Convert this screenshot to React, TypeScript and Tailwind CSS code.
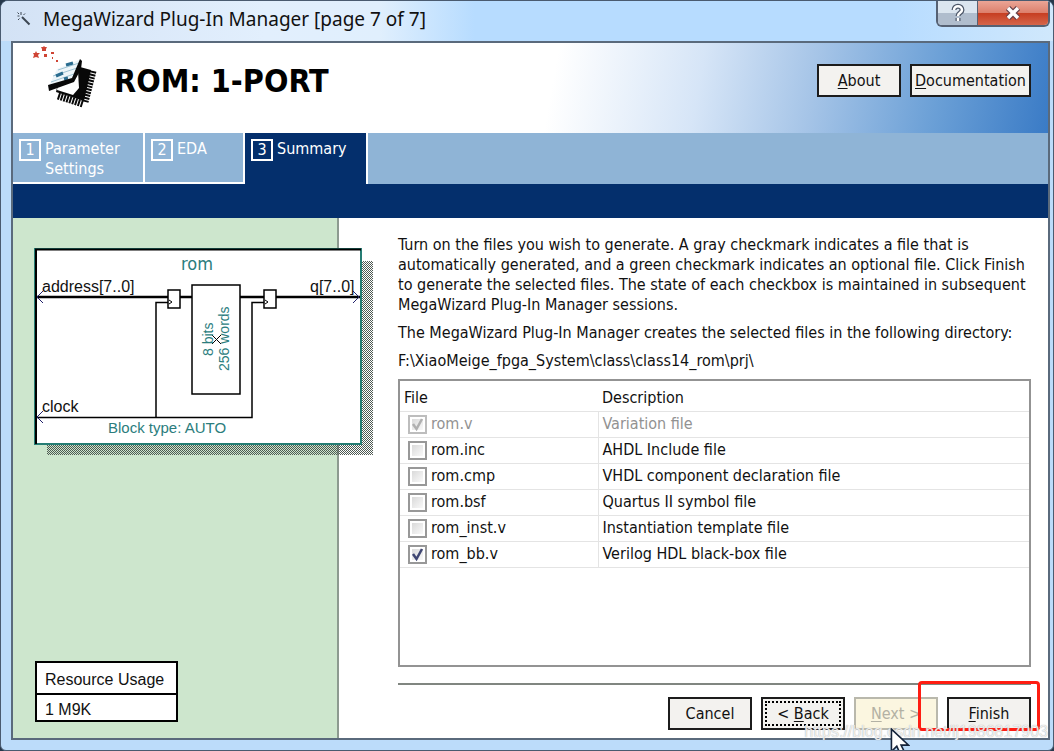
import { useState } from "react"
import type { ReactNode } from "react"
import clsx from "clsx"

const files = [
  { name: "rom.v", description: "Variation file", checked: true, disabled: true },
  { name: "rom.inc", description: "AHDL Include file", checked: false },
  { name: "rom.cmp", description: "VHDL component declaration file", checked: false },
  { name: "rom.bsf", description: "Quartus II symbol file", checked: false },
  { name: "rom_inst.v", description: "Instantiation template file", checked: false },
  { name: "rom_bb.v", description: "Verilog HDL black-box file", checked: true },
]

const tabs = [
  { step: 1, label: "Parameter Settings", width: "w-[132px]" },
  { step: 2, label: "EDA", width: "w-[100px]" },
  { step: 3, label: "Summary", width: "w-[123px]", active: true },
]

function Button({ children, className, disabled }: { children: ReactNode; className?: string; disabled?: boolean }) {
  return (
    <button
      type="button"
      disabled={disabled}
      className={clsx(
        "relative h-[33px] border-2 whitespace-nowrap",
        disabled ? "border-[#b9b8ac] bg-[#fbf6e0] text-[#b3b1a4]" : "border-[#1c1c1c] bg-[#f3f2ef] text-[#111]",
        className
      )}
    >
      {children}
    </button>
  )
}

function WandIcon() {
  return (
    <svg className="h-4 w-4" viewBox="0 0 16 16" fill="none" stroke="#3c4652">
      <path d="M6 6l7.500 7.500" strokeWidth="2" />
      <path d="M5 1v3M1.500 5h2M9 2.500L7.500 4M2 9l1.500-1.500M1.500 1.500l1.500 1.500" strokeWidth="1" />
    </svg>
  )
}

function ChipLogo() {
  return (
    <svg className="h-16 w-16 overflow-visible" viewBox="0 0 64 64">
      <g fill="#cf4434">
        <path d="M-1 6h2l1-2 1 2h3l-2 2 1 3-3-1-3 1 1-3z" />
        <path d="M7 0h2l1-1 1 1h2l-1 2v2H8V2z" />
        <path d="M10 7h3v3h-3zM17 5h3v2h-3zM18 10h1v2h-1zM22 13h2v2h-2z" />
      </g>
      {/* package body and its pins */}
      <path d="M46 20l11 3-7 31-28-9 2-9z" fill="#080808" />
      <path d="M24 49l25 8" stroke="#080808" strokeWidth="7" strokeDasharray="2 1" />
      <path d="M59 24l-8 31" stroke="#080808" strokeWidth="7" strokeDasharray="2 1" />
      <path d="M24 38l20-14 1 17-6 7-16-5z" fill="#fff" />
      {/* lifted cover */}
      <path d="M23 22l24-10-8 20-25 9z" fill="#edf5f9" />
      <path d="M19 29l24-8M17 35l23-8M24 23l21-7" stroke="#9fc3d3" strokeWidth="1" />
      <path d="M22 29l7-3M32 18l7-2M30 32l4-1" stroke="#2a6c8f" strokeWidth="3" />
      <path d="M14 38l24-7 8-19 2 2-1 8-7 13-25 9z" fill="#080808" />
    </svg>
  )
}

function SymbolDiagram() {
  return (
    <svg className="relative z-10 block h-[208px] w-[340px] shrink-0" viewBox="0 0 340 208" fontFamily="Liberation Sans, Arial, sans-serif">
      <defs>
        <pattern id="dither" width="2" height="2" patternUnits="userSpaceOnUse">
          <path d="M0 0h1v1H0zM1 1h1v1H1z" fill="#4f5a53" />
        </pattern>
      </defs>
      <path d="M13 13h326v194H13z" fill="url(#dither)" />
      <path d="M1 1h326v195H1z" fill="#fff" stroke="#267d74" strokeWidth="2" />
      <path d="M2 196V1.500H327" fill="none" stroke="#000" strokeWidth="2" />
      <g fill="none" stroke="#000">
        <path d="M3 49h131M146 49h12M206 49h24M242 49h84" strokeWidth="2.500" />
        <path d="M3 169.500h215V54.500h12M122 169.500V54.500h12" strokeWidth="1.500" />
        <path d="M134 42h12v18h-12zM230 42h12v18h-12zM158 37h48v109h-48z" strokeWidth="1.500" fill="#fff" />
        <path d="M135 52l3 2-3 2M231 52l3 2-3 2M178 87l9 9M187 87l-9 9" />
      </g>
      <path d="M9 43l-6 6 6 6M9 163l-6 6 6 6M319 43l6 6-6 6" fill="none" stroke="#23236b" />
      <g fill="#111" fontSize="16">
        <text x="8" y="44">address[7..0]</text>
        <text x="276" y="44">q[7..0]</text>
        <text x="8" y="164">clock</text>
      </g>
      <g fill="#2b7d7d">
        <text x="163" y="22" fontSize="18" textAnchor="middle" fontFamily="DejaVu Sans Condensed, Noto Sans, sans-serif">rom</text>
        <text x="74" y="185" fontSize="15">Block type: AUTO</text>
        <text transform="translate(179 108) rotate(-90)" fontSize="14">8 bits</text>
        <text transform="translate(195 123) rotate(-90)" fontSize="14">256 words</text>
      </g>
    </svg>
  )
}

function Cursor() {
  return (
    <svg className="absolute right-[138px] -bottom-5 z-20 h-[30px] w-[20px]" viewBox="0 0 18 28">
      <path d="M1 1v21l5-5 4 9 4-2-4-8h7z" fill="#fff" stroke="#14233a" strokeWidth="1.500" />
    </svg>
  )
}

function FileTable() {
  const [checked, setChecked] = useState(files.map((file) => file.checked))

  return (
    <div className="mt-2 min-h-[288px] flex-1 border-2 border-[#939393] bg-white">
      <table className="w-full table-fixed border-collapse text-left">
        <thead>
          <tr className="h-[30px] border-b border-[#e4e4e4]">
            <th className="w-[198px] pt-1 pl-1 font-normal">File</th>
            <th className="pt-1 pl-1 font-normal">Description</th>
          </tr>
        </thead>
        <tbody>
          {files.map((file, index) => (
            <tr key={file.name} className={clsx("h-[26px] border-b border-[#e4e4e4]", file.disabled && "text-[#929292]")}>
              <td className="border-r border-[#e4e4e4] p-0 pl-2">
                <label className="flex items-center gap-1">
                  <span className="relative h-[19px] w-[19px]">
                    <input
                      type="checkbox"
                      checked={checked[index]}
                      disabled={file.disabled}
                      onChange={() => setChecked(checked.map((value, i) => (i === index ? !value : value)))}
                      className={clsx(
                        "block h-[19px] w-[19px] appearance-none border-2 bg-[linear-gradient(135deg,#d4d4d4,#ffffff)] bg-clip-content p-[2px]",
                        file.disabled ? "border-[#bdbdbd]" : "border-[#989898]"
                      )}
                    />
                    {checked[index] && (
                      <svg className="pointer-events-none absolute inset-0" viewBox="0 0 19 19" fill="none">
                        <path d="M5 9l3.500 5L14 4" stroke={file.disabled ? "#b0b0b0" : "#3f4672"} strokeWidth="2.500" />
                      </svg>
                    )}
                  </span>
                  {file.name}
                </label>
              </td>
              <td className="p-0 pl-1">{file.description}</td>
            </tr>
          ))}
        </tbody>
      </table>
    </div>
  )
}

export default function App() {
  return (
    <div className="flex min-h-screen flex-col overflow-hidden bg-[#26384b] font-['DejaVu_Sans_Condensed','Noto_Sans',sans-serif] text-[16px] leading-5 text-[#111]">
      <div className="relative flex flex-1 flex-col overflow-hidden rounded-t-lg rounded-b-md border border-[#4a5b70] bg-[#bcdcfa] pr-[3px] pb-[10px] pl-[10px]">
        <header className="-mr-[3px] -ml-[10px] flex h-10 items-start justify-between bg-[linear-gradient(90deg,#d3e2f5_0%,#e2effd_25%,#e0effd_36%,#b7dcff_45%,#b7dcff_85%,#d0e8fc_100%)] pr-[3px] pl-[15px]">
          <div className="flex h-9 items-center gap-[11px]">
            <WandIcon />
            <h1 className="font-['Noto_Sans',sans-serif] text-[19px]">MegaWizard Plug-In Manager [page 7 of 7]</h1>
          </div>
          <div className="flex h-[26px] w-[114px] overflow-hidden rounded-b-md border-2 border-t-0 border-[#566173] text-white">
            <button type="button" aria-label="Help" className="w-10 border-r border-[#566173] bg-[linear-gradient(#dbe5ef_50%,#b0bdcd_50%)]">
              <svg className="mx-auto h-5 w-5" viewBox="0 0 20 20" fill="none">
                <path d="M6 7c0-5 8-5 8 0 0 3-4 2.500-4 6M10 15v3" stroke="#4c5668" strokeWidth="5" />
                <path d="M6 7c0-5 8-5 8 0 0 3-4 2.500-4 6M10 15v3" stroke="#fff" strokeWidth="2.500" />
              </svg>
            </button>
            <button type="button" aria-label="Close" className="flex-1 bg-[linear-gradient(#eba596_0%,#dc7f6b_50%,#c63d20_50%,#d5654a_100%)]">
              <svg className="mx-auto h-5 w-5" viewBox="0 0 20 20" fill="none">
                <path d="M5 5l10 10M15 5L5 15" stroke="#64404a" strokeWidth="6" />
                <path d="M5 5l10 10M15 5L5 15" stroke="#fff" strokeWidth="3.500" />
              </svg>
            </button>
          </div>
        </header>

        <div className="flex flex-1 flex-col border-2 border-[#5a6a7c] bg-white">
          <div className="flex h-[90px] items-start bg-[linear-gradient(100deg,#ffffff_52%,#d6e5f7_66%,#a5c4e7_77%,#6a9fd6_89%,#3a7bc6_100%)] pr-[17px] pl-[21px]">
            <div className="mt-1">
              <ChipLogo />
            </div>
            <h2 className="mt-[18px] ml-4 flex-1 text-[32px] leading-10 font-bold text-black">ROM: 1-PORT</h2>
            <div className="mt-[21px] flex gap-[9px]">
              <Button className="w-[84px]"><u className="underline-offset-2">A</u>bout</Button>
              <Button className="w-[121px]"><u className="underline-offset-2">D</u>ocumentation</Button>
            </div>
          </div>

          <nav className="flex h-[51px] bg-[#8fb4d6] text-white">
            {tabs.map((tab) => (
              <a
                key={tab.step}
                href="#"
                className={clsx(
                  "flex items-start gap-1 border-r-2 border-white pt-[6px] pl-[6px]",
                  tab.width,
                  tab.active ? "bg-[#042f6c]" : "border-b-2"
                )}
              >
                <span className="flex h-[22px] w-[22px] shrink-0 items-center justify-center border-2 border-white">{tab.step}</span>
                <span>{tab.label}</span>
              </a>
            ))}
          </nav>
          <div className="h-[34px] bg-[#042f6c]" />

          <div className="flex flex-1">
            <aside className="flex w-[326px] shrink-0 flex-col justify-between border-r-2 border-[#8d9a90] bg-[#cde6cd] pt-[30px] pb-4 pl-[21px]">
              <SymbolDiagram />
              <div className="ml-px w-[143px] border-2 border-black bg-white font-['Liberation_Sans',Arial,sans-serif]">
                <h3 className="border-b-2 border-black pt-[7px] pb-[3px] pl-2">Resource Usage</h3>
                <p className="pt-[5px] pl-2">1 M9K</p>
              </div>
            </aside>

            <main className="relative flex min-w-0 flex-1 flex-col pt-[17px] pr-[17px] pb-2 pl-[59px]">
              <p>
                Turn on the files you wish to generate. A gray checkmark indicates a file that is automatically generated,
                and a green checkmark indicates an optional file. Click Finish to generate the selected files. The state of
                each checkbox is maintained in subsequent MegaWizard Plug-In Manager sessions.
              </p>
              <p className="mt-2">The MegaWizard Plug-In Manager creates the selected files in the following directory:</p>
              <p className="mt-2">F:\XiaoMeige_fpga_System\class\class14_rom\prj\</p>
              <FileTable />
              <hr className="mt-4 border-t-2 border-[#808680]" />
              <div className="mt-3 flex justify-end gap-[9px]">
                <Button className="w-[84px]">Cancel</Button>
                <Button className="w-[84px]">
                  <span className="absolute inset-[2px] border-2 border-dotted border-black" />
                  &lt; <u className="underline-offset-2">B</u>ack
                </Button>
                <Button className="w-[84px]" disabled><u className="underline-offset-2">N</u>ext &gt;</Button>
                <div className="relative">
                  <Button className="w-[84px]"><u className="underline-offset-2">F</u>inish</Button>
                  <div className="pointer-events-none absolute -top-4 -right-[9px] -bottom-px -left-[29px] rounded-sm border-[3px] border-[#ff1d12]" />
                </div>
              </div>
              <span className="pointer-events-none absolute right-0 -bottom-1 font-['Liberation_Sans',Arial,sans-serif] text-[16px] text-white/80 [text-shadow:0_0_1px_#999]">
                https://blog.csdn.net/lj1986817903
              </span>
              <Cursor />
            </main>
          </div>
        </div>
      </div>
    </div>
  )
}
